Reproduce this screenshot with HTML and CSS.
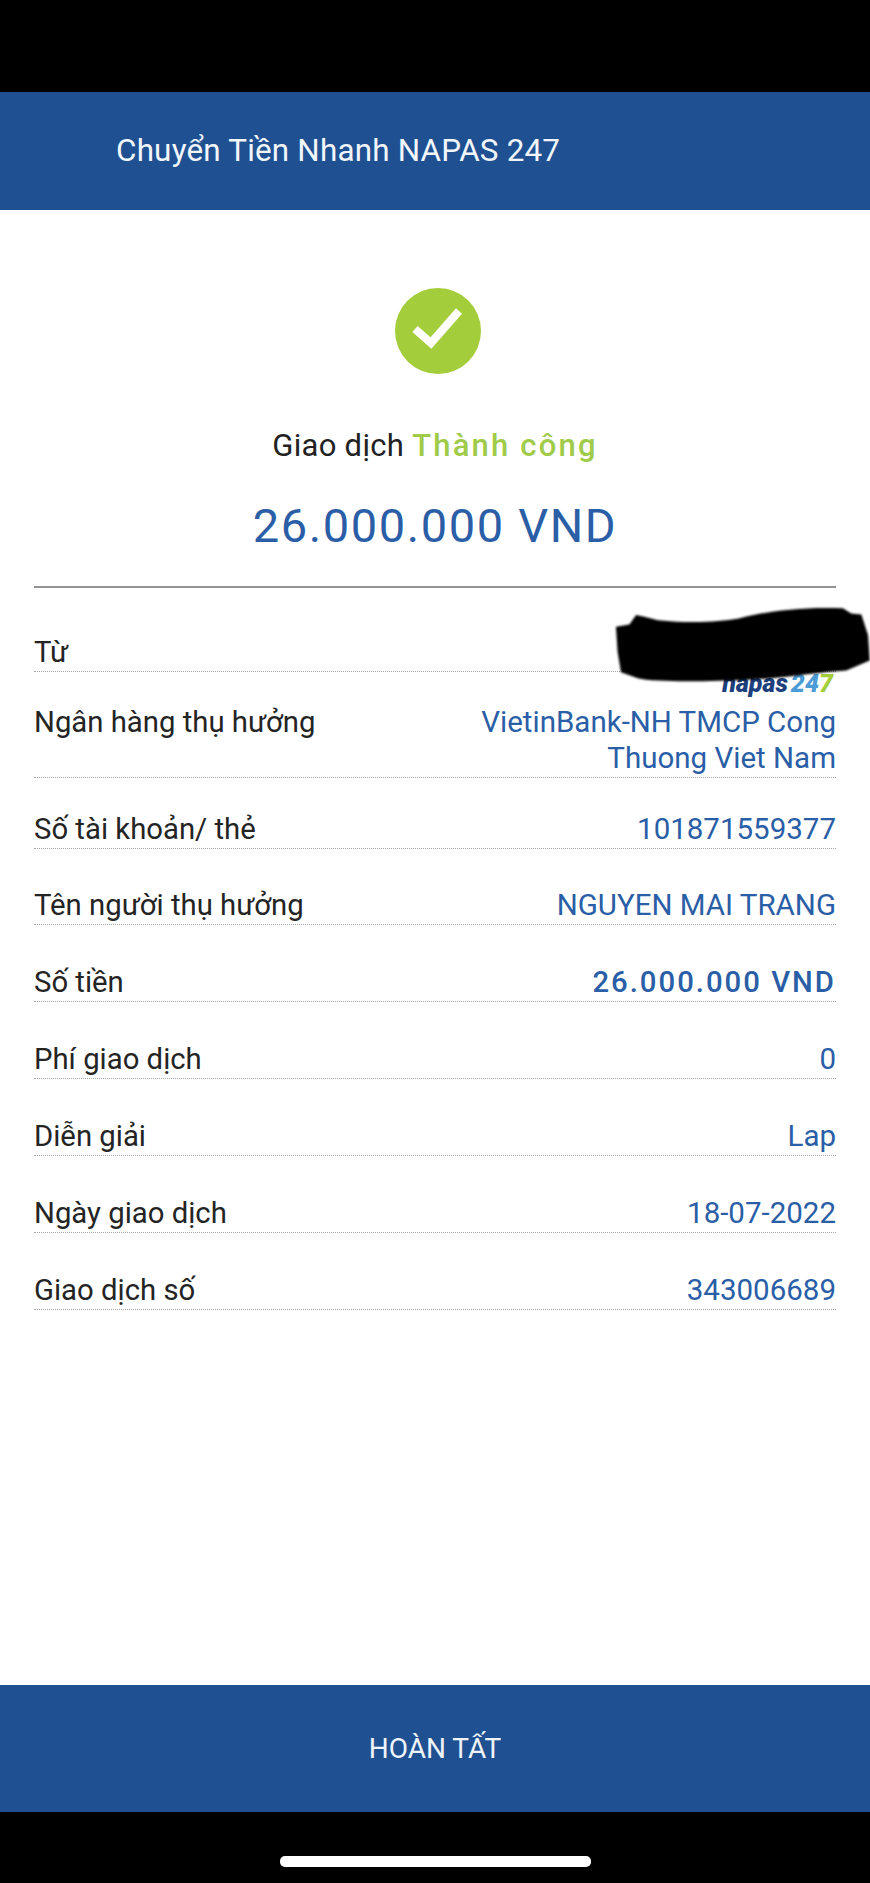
FILE: index.html
```html
<!DOCTYPE html>
<html lang="vi">
<head>
<meta charset="utf-8">
<title>Chuyển Tiền Nhanh NAPAS 247</title>
<link rel="stylesheet" href="styles.css">
</head>
<body>
<div class="screen">
  <div class="status-bar"></div>
  <header class="app-header"><h1 class="app-title">Chuyển Tiền Nhanh NAPAS 247</h1></header>
  <main class="content">
    <section class="summary">
      <svg class="check-icon" viewBox="0 0 86 86" aria-hidden="true">
        <circle cx="43" cy="43" r="43" fill="#a4cd3c"/>
        <path d="M20 41 L36 55 L64 23" fill="none" stroke="#fff" stroke-width="8"/>
      </svg>
      <p class="status-text">Giao dịch <span class="status-ok">Thành công</span></p>
      <p class="amount">26.000.000 VND</p>
    </section>
    <div class="details">
      <div class="row row-first">
        <span class="label">Từ</span>
        <span class="napas-logo"><span class="napas-word">napas</span><span class="napas-2">24</span><span class="napas-7">7</span></span>
        <svg class="redaction" viewBox="170 40 760 235" aria-hidden="true">
          <path d="M175 105 L215 98 L235 70 L260 75 L300 85 C400 95 480 90 540 80 C620 60 720 45 850 50 L875 65 L905 68 L925 130 L930 205 L860 235 C760 240 650 265 480 265 C400 268 280 268 240 258 L190 240 L180 180 Z" fill="#000"/>
        </svg>
      </div>
      <div class="row row-bank"><span class="label">Ngân hàng thụ hưởng</span><span class="value value-wrap">VietinBank-NH TMCP Cong Thuong Viet Nam</span></div>
      <div class="row row-account"><span class="label">Số tài khoản/ thẻ</span><span class="value">101871559377</span></div>
      <div class="row row-name"><span class="label">Tên người thụ hưởng</span><span class="value">NGUYEN MAI TRANG</span></div>
      <div class="row"><span class="label">Số tiền</span><span class="value value-strong">26.000.000 VND</span></div>
      <div class="row"><span class="label">Phí giao dịch</span><span class="value">0</span></div>
      <div class="row"><span class="label">Diễn giải</span><span class="value">Lap</span></div>
      <div class="row"><span class="label">Ngày giao dịch</span><span class="value">18-07-2022</span></div>
      <div class="row"><span class="label">Giao dịch số</span><span class="value">343006689</span></div>
    </div>
  </main>
  <button class="done-button" type="button">HOÀN TẤT</button>
  <div class="home-area"><div class="home-bar"></div></div>
</div>
</body>
</html>
```

FILE: styles.css
```css
* { box-sizing: border-box; }
html, body { margin: 0; padding: 0; background: #000; }
body { font-family: Roboto, "Liberation Sans", sans-serif; }

.screen { width: 870px; height: 1883px; display: flex; flex-direction: column; overflow: hidden; }
.status-bar { height: 92px; background: #000; flex: none; }

.app-header { height: 118px; flex: none; background: #1f5091; display: flex; align-items: center; padding: 0 0 1px 116px; }
.app-title { margin: 0; font-size: 31.4px; font-weight: 400; color: #f2f6fb; letter-spacing: 0.2px; }

.content { flex: 1; background: #fff; padding: 0 34px; }
.summary { display: flex; flex-direction: column; align-items: center; padding-top: 78px; border-bottom: 2px solid #949494; height: 378px; }
.check-icon { width: 86px; height: 86px; flex: none; margin-left: 6px; }
.status-text { margin: 50px 0 0; font-size: 31px; line-height: 44px; color: #222; letter-spacing: 0.3px; }
.status-ok { color: #a0cb4a; font-weight: 500; letter-spacing: 2.2px; }
.amount { margin: 30px 0 0; font-size: 47px; line-height: 56px; color: #2a5ea6; letter-spacing: 1.6px; }

.details { display: flex; flex-direction: column; }
.row { position: relative; display: flex; justify-content: space-between; align-items: flex-start; padding: 39px 0 1px; border-bottom: 1px dotted #a8a8a8; font-size: 29.3px; line-height: 36px; }
.row-first { height: 84px; padding-top: 46px; }
.row-bank { padding-top: 32px; }
.row-account { padding-top: 33px; }
.row-name { padding-top: 38px; }
.label { color: #242424; }
.value { color: #2a5ea6; text-align: right; font-size: 29.5px; }
.value-wrap { width: 370px; }
.value-strong { font-size: 29.3px; font-weight: 500; letter-spacing: 2px; }

.napas-logo { position: absolute; right: 3px; top: 81px; font-size: 25px; line-height: 30px; font-weight: 900; font-style: italic; white-space: nowrap; }
.napas-word { color: #1d3f7c; }
.napas-2 { color: #4a9bd6; margin-left: 3px; }
.napas-7 { color: #a4cd3c; }
.redaction { position: absolute; right: -34px; top: 17px; width: 256px; height: 79px; filter: blur(1px); }

.done-button { flex: none; height: 127px; border: 0; background: #1f5091; color: #eef3f9; font: 400 28px Roboto, "Liberation Sans", sans-serif; }
.home-area { flex: none; height: 71px; background: #000; display: flex; justify-content: center; padding-top: 44px; }
.home-bar { width: 311px; height: 11px; border-radius: 5px; background: #fff; }
```
